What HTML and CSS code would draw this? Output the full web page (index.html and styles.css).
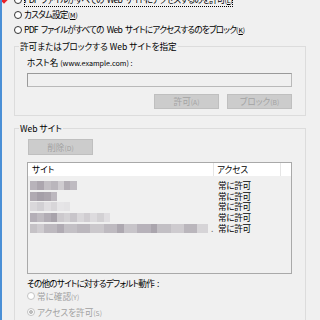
FILE: index.html
```html
<!DOCTYPE html>
<html lang="ja">

<head>
    <meta charset="UTF-8">
    <meta name="viewport" content="width=device-width, initial-scale=1.0">
    <title>PDF Web アクセス設定</title>
    <link rel="stylesheet" href="styles.css">
</head>

<body>
    <div class="dialog">
        <!-- red annotation mark over the first option -->
        <div class="marker"></div>

        <div class="options">
            <div class="radio-row">
                <span class="radio"></span>
                <span class="focus">PDF ファイルがすべての Web サイトにアクセスするのを許可<span class="key">(<u>L</u>)</span></span>
            </div>
            <div class="radio-row">
                <span class="radio"></span>
                <span>カスタム設定<span class="key">(<u>M</u>)</span></span>
            </div>
            <div class="radio-row">
                <span class="radio"></span>
                <span>PDF ファイルがすべての Web サイトにアクセスするのをブロック<span class="key">(<u>K</u>)</span></span>
            </div>
        </div>

        <fieldset class="group">
            <legend>許可またはブロックする Web サイトを指定</legend>
            <div class="label">ホスト名 <span class="small">(www.example.com) :</span></div>
            <div class="textbox"></div>
            <div class="button-row">
                <div class="btn">許可<span class="key">(A)</span></div>
                <div class="btn">ブロック<span class="key">(B)</span></div>
            </div>
        </fieldset>

        <fieldset class="group sites">
            <legend>Web サイト</legend>
            <div class="btn btn-delete">削除<span class="key">(D)</span></div>

            <div class="listbox">
                <div class="list-head">
                    <div class="col-site">サイト</div>
                    <div class="col-access">アクセス</div>
                    <div class="col-rest"></div>
                </div>
                <div class="list-body">
                    <div class="list-row">
                        <div class="col-site"><span class="blur blur-1"></span></div>
                        <div class="col-access">常に許可</div>
                    </div>
                    <div class="list-row">
                        <div class="col-site"><span class="blur blur-2"></span></div>
                        <div class="col-access">常に許可</div>
                    </div>
                    <div class="list-row">
                        <div class="col-site"><span class="blur blur-3"></span></div>
                        <div class="col-access">常に許可</div>
                    </div>
                    <div class="list-row">
                        <div class="col-site"><span class="blur blur-4"></span></div>
                        <div class="col-access">常に許可</div>
                    </div>
                    <div class="list-row">
                        <div class="col-site"><span class="blur blur-5"></span><span class="dot">.</span></div>
                        <div class="col-access">常に許可</div>
                    </div>
                </div>
            </div>

            <div class="label default-label">その他のサイトに対するデフォルト動作 :</div>
            <div class="radio-row disabled">
                <span class="radio"></span>
                <span>常に確認<span class="key">(Y)</span></span>
            </div>
            <div class="radio-row disabled">
                <span class="radio checked"></span>
                <span>アクセスを許可<span class="key">(S)</span></span>
            </div>
        </fieldset>
    </div>
</body>

</html>
```

FILE: styles.css
```css
body {
    margin: 0;
    background-color: #f0f0f0;
}

.dialog {
    position: relative;
    width: 320px;
    height: 320px;
    overflow: hidden;
    box-sizing: border-box;
    border-left: 2px solid #4a8fd6;
    font-family: "Noto Sans CJK JP", "Liberation Sans", sans-serif;
    font-size: 8.6px;
    font-feature-settings: "palt";
    color: #000;
}

.marker {
    position: absolute;
    top: -6px;
    left: -2px;
    width: 8px;
    height: 8px;
    background-color: #e8222a;
    transform: rotate(45deg);
}

/* radio options */
.options {
    margin-top: -8px;
    padding-left: 12px;
    letter-spacing: -0.8px;
    word-spacing: 2px;
}

.radio-row {
    display: flex;
    align-items: center;
    height: 15px;
    line-height: 15px;
    white-space: nowrap;
}

.radio {
    width: 8px;
    height: 8px;
    box-sizing: border-box;
    border: 1px solid #333;
    border-radius: 50%;
    background-color: #fff;
    margin-right: 2px;
    flex: none;
}

.focus {
    outline: 1px dotted #000;
    outline-offset: -1px;
    line-height: 13px;
}

.key {
    font-size: 6.8px;
    letter-spacing: 0;
}

/* group boxes */
.group {
    margin: 4px 14px 0 12px;
    padding: 0 13px 6px 12px;
    border: 1px solid #dcdcdc;
    min-width: 0;
}

.group legend {
    margin-left: -8px;
    padding: 0 1px;
    line-height: 10px;
}

.label {
    margin-top: 6px;
    line-height: 10px;
    white-space: nowrap;
}

.small {
    font-size: 7.2px;
}

.textbox {
    margin-top: 5px;
    height: 14px;
    box-sizing: border-box;
    border: 1px solid #b9b9b9;
    border-top-color: #9a9a9a;
    border-left-color: #9a9a9a;
    background-color: #f0f0f0;
}

.button-row {
    display: flex;
    justify-content: flex-end;
    gap: 8px;
    margin-top: 7px;
}

.btn {
    width: 65px;
    height: 15px;
    box-sizing: border-box;
    border: 1px solid #bfbfbf;
    background-color: #cccccc;
    color: #a3a3a3;
    text-align: center;
    line-height: 13px;
}

.sites {
    margin-top: 7px;
    padding-bottom: 40px;
}

.btn-delete {
    margin: 6px 0 0 1px;
    height: 16px;
    line-height: 14px;
}

/* list of sites */
.listbox {
    margin-top: 7px;
    height: 112px;
    box-sizing: border-box;
    border: 1px solid #a9a9a9;
    background-color: #f0f0f0;
}

.list-head {
    display: flex;
    height: 13px;
    line-height: 13px;
    background-color: #fff;
}

.list-head .col-site {
    width: 186px;
    padding-left: 4px;
    box-sizing: border-box;
    border-right: 1px solid #e5e5e5;
}

.list-head .col-access {
    width: 67px;
    padding-left: 3px;
    box-sizing: border-box;
    border-right: 1px solid #e5e5e5;
}

.list-head .col-rest {
    flex: 1;
}

.list-body {
    padding-top: 4px;
}

.list-row {
    display: flex;
    height: 10.7px;
    line-height: 10.7px;
}

.list-row .col-site {
    width: 186px;
    padding-left: 2px;
    box-sizing: border-box;
    display: flex;
    align-items: center;
}

.list-row .col-access {
    padding-left: 4px;
    letter-spacing: -0.3px;
}

.blur {
    display: inline-block;
    height: 9px;
}

.blur-1 {
    width: 47px;
    background: linear-gradient(90deg, #b8b3ba 0 7px, #aca6ae 7px 14px, #c3bfc4 14px 21px, #bab6bc 21px 28px, #cfccd0 28px 34px, #b3aeb5 34px 40px, #bfbbc1 40px 47px);
}

.blur-2 {
    width: 27px;
    background: linear-gradient(90deg, #b0aab2 0 7px, #a59fa8 7px 14px, #aba5ad 14px 21px, #bcb7be 21px 27px);
}

.blur-3 {
    width: 40px;
    background: linear-gradient(90deg, #dad8db 0 7px, #d2d0d4 7px 14px, #e0dee1 14px 21px, #d8d6d9 21px 27px, #e6e5e7 27px 34px, #e4e3e5 34px 40px);
}

.blur-4 {
    width: 80px;
    background: linear-gradient(90deg, #b4afb7 0 7px, #bfbbc1 7px 14px, #b2adb5 14px 21px, #a8a3ab 21px 27px, #ccc9cd 27px 34px, #d3d1d4 34px 40px, #c8c5ca 40px 47px, #d9d7da 47px 54px, #d0cdd1 54px 60px, #dddbde 60px 67px, #d3d1d4 67px 74px, #e0dee1 74px 80px);
}

.blur-5 {
    width: 178px;
    background: linear-gradient(90deg, #c5c2c6 0 7px, #cfccd0 7px 14px, #bdb9bf 14px 27px, #b0abb3 27px 34px, #c3c0c5 34px 47px, #bbb7bd 47px 60px, #cbc8cc 60px 74px, #bebac0 74px 87px, #ada8b0 87px 94px, #c7c4c9 94px 107px, #b7b2ba 107px 121px, #aaa5ad 121px 127px, #c2bfc4 127px 141px, #cecbcf 141px 154px, #bab6bc 154px 167px, #d6d4d7 167px 178px);
}

.dot {
    margin-left: 3px;
    color: #777;
    line-height: 8px;
}

.default-label {
    margin-top: 4px;
    letter-spacing: -0.8px;
    word-spacing: 2px;
}

.sites .radio-row {
    height: 16px;
    line-height: 16px;
}

.disabled {
    color: #a0a0a0;
}

.disabled .radio {
    border-color: #c4c4c4;
    margin-right: 2px;
}

.disabled .radio.checked {
    background: radial-gradient(circle, #bdbdbd 0 1.8px, #fff 2.2px);
}
```
